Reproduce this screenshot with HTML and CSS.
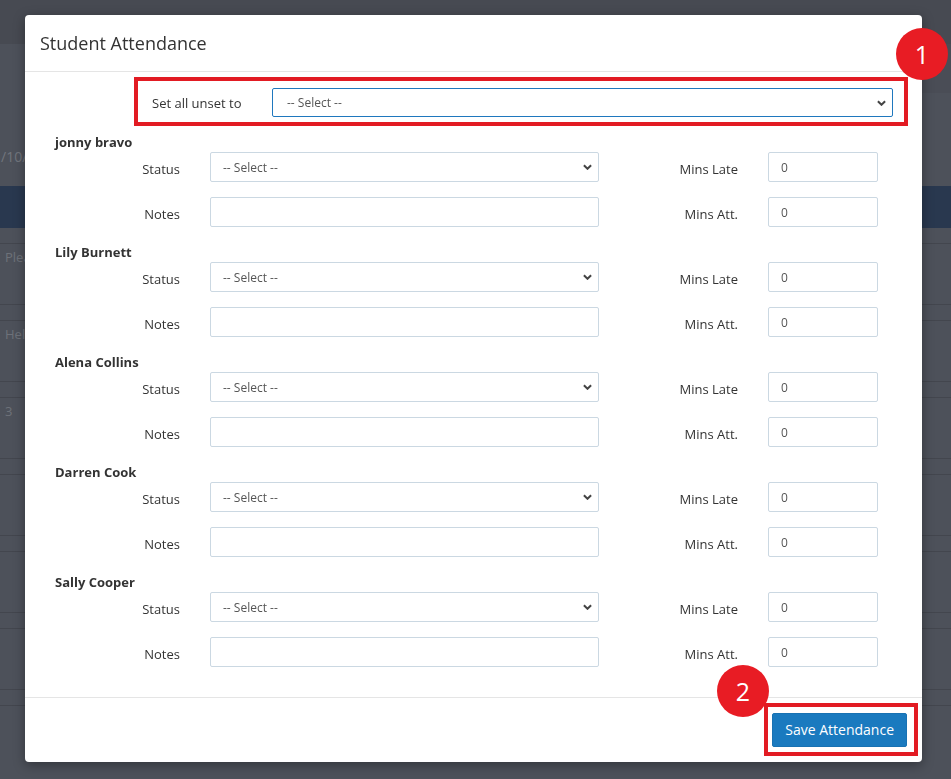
FILE: index.html
```html
<!DOCTYPE html>
<html lang="en">
<head>
    <meta charset="UTF-8">
    <meta name="viewport" content="width=device-width, initial-scale=1">
    <title>Student Attendance</title>
    <link rel="stylesheet" href="styles.css">
</head>
<body>

    <!-- Page behind the dialog (dimmed) -->
    <div class="page">
        <div class="topbar"></div>
        <div class="subbar">
            <div class="subbar-tools"></div>
            <span class="date">11/10/2</span>
        </div>
        <div class="grid-head"></div>
        <div class="grid-body">
            <div class="grid-row"><span class="cell">Plea</span></div>
            <div class="grid-detail"></div>
            <div class="grid-row"><span class="cell">Hell</span></div>
            <div class="grid-detail"></div>
            <div class="grid-row"><span class="cell">3</span></div>
            <div class="grid-detail"></div>
            <div class="grid-row"></div>
            <div class="grid-detail"></div>
            <div class="grid-row"></div>
            <div class="grid-detail"></div>
            <div class="grid-row"></div>
            <div class="grid-detail"></div>
            <div class="grid-row"></div>
        </div>
    </div>

    <!-- Attendance Dialog -->
    <div class="modal">
        <div class="modal-header">
            <h4>Student Attendance</h4>
        </div>

        <div class="modal-body">
            <div class="set-all">
                <label>Set all unset to</label>
                <div class="select-wrap">
                    <select class="focused"><option>-- Select --</option></select>
                    <svg class="chevron" viewBox="0 0 10 6"><path d="M1 1l4 4 4-4"/></svg>
                </div>
            </div>

            <div class="student">
                <div class="student-name">jonny bravo</div>
                <div class="field-row">
                    <label>Status</label>
                    <div class="select-wrap">
                        <select><option>-- Select --</option></select>
                        <svg class="chevron" viewBox="0 0 10 6"><path d="M1 1l4 4 4-4"/></svg>
                    </div>
                    <label>Mins Late</label>
                    <input type="text" value="0">
                </div>
                <div class="field-row">
                    <label>Notes</label>
                    <input type="text">
                    <label>Mins Att.</label>
                    <input type="text" value="0">
                </div>
            </div>

            <div class="student">
                <div class="student-name">Lily Burnett</div>
                <div class="field-row">
                    <label>Status</label>
                    <div class="select-wrap">
                        <select><option>-- Select --</option></select>
                        <svg class="chevron" viewBox="0 0 10 6"><path d="M1 1l4 4 4-4"/></svg>
                    </div>
                    <label>Mins Late</label>
                    <input type="text" value="0">
                </div>
                <div class="field-row">
                    <label>Notes</label>
                    <input type="text">
                    <label>Mins Att.</label>
                    <input type="text" value="0">
                </div>
            </div>

            <div class="student">
                <div class="student-name">Alena Collins</div>
                <div class="field-row">
                    <label>Status</label>
                    <div class="select-wrap">
                        <select><option>-- Select --</option></select>
                        <svg class="chevron" viewBox="0 0 10 6"><path d="M1 1l4 4 4-4"/></svg>
                    </div>
                    <label>Mins Late</label>
                    <input type="text" value="0">
                </div>
                <div class="field-row">
                    <label>Notes</label>
                    <input type="text">
                    <label>Mins Att.</label>
                    <input type="text" value="0">
                </div>
            </div>

            <div class="student">
                <div class="student-name">Darren Cook</div>
                <div class="field-row">
                    <label>Status</label>
                    <div class="select-wrap">
                        <select><option>-- Select --</option></select>
                        <svg class="chevron" viewBox="0 0 10 6"><path d="M1 1l4 4 4-4"/></svg>
                    </div>
                    <label>Mins Late</label>
                    <input type="text" value="0">
                </div>
                <div class="field-row">
                    <label>Notes</label>
                    <input type="text">
                    <label>Mins Att.</label>
                    <input type="text" value="0">
                </div>
            </div>

            <div class="student">
                <div class="student-name">Sally Cooper</div>
                <div class="field-row">
                    <label>Status</label>
                    <div class="select-wrap">
                        <select><option>-- Select --</option></select>
                        <svg class="chevron" viewBox="0 0 10 6"><path d="M1 1l4 4 4-4"/></svg>
                    </div>
                    <label>Mins Late</label>
                    <input type="text" value="0">
                </div>
                <div class="field-row">
                    <label>Notes</label>
                    <input type="text">
                    <label>Mins Att.</label>
                    <input type="text" value="0">
                </div>
            </div>
        </div>

        <div class="modal-footer">
            <button class="save-btn">Save Attendance</button>
        </div>
    </div>

    <!-- Tutorial callouts -->
    <div class="callout callout-1"></div>
    <span class="step step-1">1</span>
    <div class="callout callout-2"></div>
    <span class="step step-2">2</span>

</body>
</html>
```

FILE: styles.css
```css
/* General */
body {
    margin: 0;
    font-family: "Open Sans", "Liberation Sans", Arial, sans-serif;
    background: #4d515a;
    color: #333;
    height: 779px;
    overflow: hidden;
}

/* Dimmed page behind the dialog */
.topbar {
    height: 44px;
    background: #474a52;
}

.subbar {
    height: 142px;
    position: relative;
    overflow: hidden;
}

.subbar-tools {
    margin-left: auto;
    width: 90px;
    height: 49px;
    background: #4a4d56;
}

.date {
    position: absolute;
    left: -15px;
    top: 103px;
    font-size: 14px;
    color: #71757d;
}

.grid-head {
    height: 42px;
    background: #29384f;
}

.grid-body {
    padding-top: 15px;
}

.grid-row {
    height: 61px;
    box-sizing: border-box;
    border-top: 1px solid #43464e;
    padding: 4px 0 0 5px;
    font-size: 13px;
    color: #6d7179;
}

.cell {
    display: inline-block;
    width: 20px;
    overflow: hidden;
    white-space: nowrap;
}

.grid-detail {
    height: 16px;
    box-sizing: border-box;
    border-top: 1px solid #43464e;
}

/* Dialog */
.modal {
    position: fixed;
    top: 15px;
    left: 25px;
    width: 897px;
    background: #fff;
    border-radius: 4px;
    box-shadow: 0 3px 12px rgba(0, 0, 0, 0.35);
}

.modal-header {
    padding: 15px;
    border-bottom: 1px solid #e5e5e5;
}

.modal-header h4 {
    margin: 0;
    font-size: 18px;
    font-weight: normal;
    line-height: 26px;
    color: #333;
}

.modal-body {
    padding: 15px;
}

.modal-footer {
    padding: 15px;
    border-top: 1px solid #e5e5e5;
    display: flex;
    justify-content: flex-end;
}

/* Form controls */
label {
    font-size: 13px;
    color: #333;
    line-height: 20px;
}

select,
input {
    box-sizing: border-box;
    width: 100%;
    height: 30px;
    margin: 0;
    padding: 0 12px;
    font-family: inherit;
    font-size: 12px;
    color: #555;
    background: #fff;
    border: 1px solid #cbd8e2;
    border-radius: 2px;
    outline: none;
}

select {
    appearance: none;
    -webkit-appearance: none;
    padding-right: 28px;
}

select.focused {
    border-color: #1f78be;
    padding-left: 14px;
}

.select-wrap {
    position: relative;
}

.chevron {
    position: absolute;
    right: 7px;
    top: 12px;
    width: 9px;
    height: 6px;
    fill: none;
    stroke: #444;
    stroke-width: 2.2;
}

/* Set all row */
.set-all {
    display: flex;
    align-items: center;
    height: 30px;
    margin: 0 14px 15px 112px;
}

.set-all label {
    flex: 0 0 120px;
    padding-top: 2px;
}

.set-all .select-wrap {
    flex: 1;
}

.set-all select {
    height: 29px;
}

/* Student blocks */
.student-name {
    height: 20px;
    line-height: 20px;
    padding-left: 15px;
    font-size: 13px;
    font-weight: bold;
    color: #333;
}

.field-row {
    display: grid;
    grid-template-columns: 140px 389px 109px 110px;
    column-gap: 30px;
    height: 30px;
    margin-bottom: 15px;
}

.field-row label {
    text-align: right;
    padding-top: 7px;
}

/* Save button */
.save-btn {
    padding: 6px 12px;
    font-family: inherit;
    font-size: 14px;
    line-height: 20px;
    color: #fff;
    background: #1a7abf;
    border: 1px solid #1872b3;
    border-radius: 2px;
    cursor: pointer;
}

/* Numbered callouts drawn over the screenshot */
.callout {
    position: absolute;
    box-sizing: border-box;
    border: 4px solid #e21b23;
}

.callout-1 {
    left: 134px;
    top: 77px;
    width: 774px;
    height: 49px;
}

.callout-2 {
    left: 764px;
    top: 703px;
    width: 154px;
    height: 53px;
}

.step {
    position: absolute;
    width: 52px;
    height: 52px;
    border-radius: 50%;
    background: #e81c24;
    color: #fff;
    font-size: 25px;
    line-height: 52px;
    text-align: center;
}

.step-1 {
    left: 896px;
    top: 28px;
}

.step-2 {
    left: 717px;
    top: 665px;
}
```
